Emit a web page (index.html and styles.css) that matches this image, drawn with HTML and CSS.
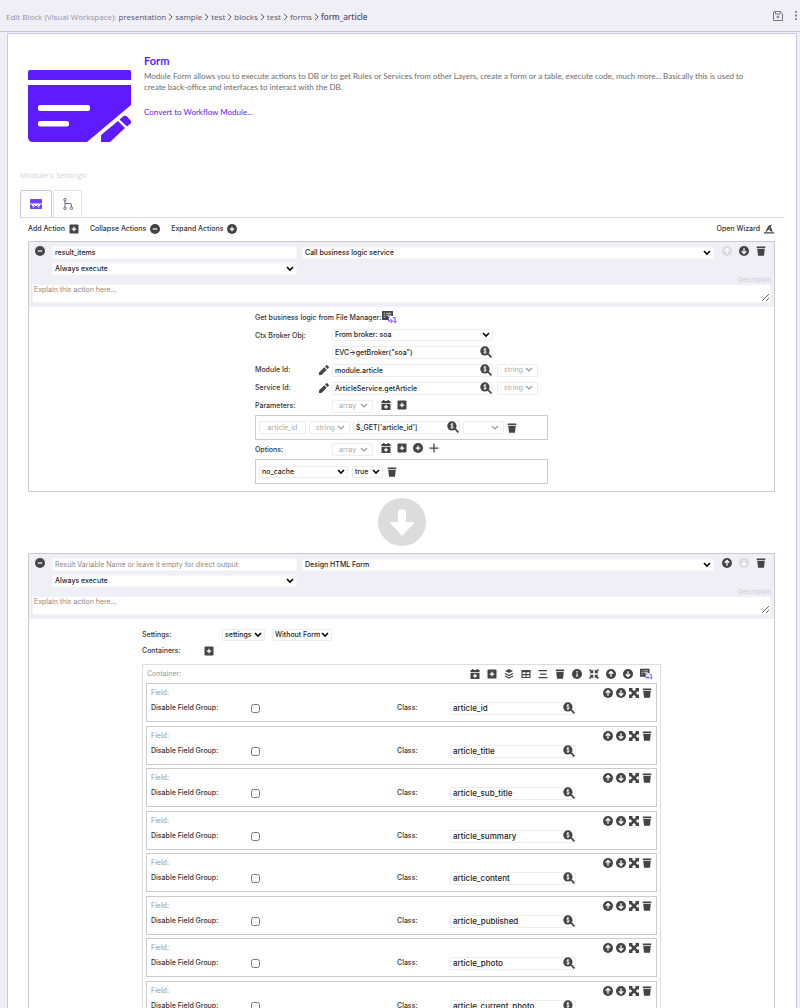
FILE: index.html
```
<!DOCTYPE html>
<html lang="en">
<head>
<meta charset="utf-8">
<title>Edit Block (Visual Workspace)</title>
<link rel="stylesheet" href="styles.css">
</head>
<body>
<svg class="sprite" aria-hidden="true">
  <symbol id="i-minus" viewBox="0 0 20 20"><circle cx="10" cy="10" r="10"/><path d="M5.5 10h9" class="cut"/></symbol>
  <symbol id="i-plus-c" viewBox="0 0 20 20"><circle cx="10" cy="10" r="10"/><path d="M5.5 10h9M10 5.500v9" class="cut"/></symbol>
  <symbol id="i-plus-s" viewBox="0 0 20 20"><rect x="1" y="1" width="18" height="18" rx="2"/><path d="M5.500 10h9M10 5.500v9" class="cut"/></symbol>
  <symbol id="i-plus" viewBox="0 0 20 20"><path d="M1 10h18M10 1v18" class="line"/></symbol>
  <symbol id="i-up" viewBox="0 0 20 20"><circle cx="10" cy="10" r="10"/><path d="M10 15.500V5.500M5.500 9.500 10 5l4.500 4.500" class="cut"/></symbol>
  <symbol id="i-down" viewBox="0 0 20 20"><circle cx="10" cy="10" r="10"/><path d="M10 4.500v10M5.500 10.500 10 15l4.500-4.500" class="cut"/></symbol>
  <symbol id="i-trash" viewBox="0 0 20 20"><path d="M1.500 1H18.500V4.500H1.500zM2.500 6h15L16 19.500H4z"/></symbol>
  <symbol id="i-info" viewBox="0 0 20 20"><circle cx="10" cy="10" r="10"/><path d="M10 9v7M10 4v3" class="cut"/></symbol>
  <symbol id="i-search" viewBox="0 0 22 22"><circle cx="9" cy="9" r="8.500"/><path d="m14 15.500 2-2 6 6-2.500 2.500z"/><path d="M11.500 6.200C10.500 5 7 5 7 7s4.500 1.800 4.500 4-3.800 2.300-5 .8M9 3.500v11" class="cut thin"/></symbol>
  <symbol id="i-pencil" viewBox="0 0 20 20"><path d="M0 20v-5L10.500 4.500l5 5L5 20zM12 3l2.500-2.500q1-1 2 0l3 3q1 1 0 2L17 8z"/></symbol>
  <symbol id="i-cal" viewBox="0 0 20 20"><path d="M1 2h3V0h3v2h6V0h3v2h3v4H1zM1 7.500h18V20H1z"/><path d="M6 13.500h8M10 9.500v8" class="cut"/></symbol>
  <symbol id="i-layers" viewBox="0 0 20 20"><path d="m10 0 8 4-8 4-8-4z"/><path d="m2 9 8 4 8-4M2 14l8 4 8-4" class="line"/></symbol>
  <symbol id="i-table" viewBox="0 0 22 20"><path d="M1 1h20v18H1zM3.500 6v4H10V6zM12 6v4h6.500V6zM3.500 12.500v4H10v-4zM12 12.500v4h6.500v-4z" fill-rule="evenodd"/></symbol>
  <symbol id="i-list" viewBox="0 0 20 20"><path d="M1 3h17M4 10h13M1 17h18" class="line"/></symbol>
  <symbol id="i-expand" viewBox="0 0 20 20"><path d="M0 0h8L5.800 2.200 10 6.500l4.200-4.300L12 0h8v8l-2.200-2.200L13.500 10l4.300 4.200L20 12v8h-8l2.200-2.200L10 13.500l-4.200 4.300L8 20H0v-8l2.200 2.200L6.500 10 2.200 5.800 0 8z"/></symbol>
  <symbol id="i-collapse" viewBox="0 0 20 20"><path d="M8.500 8.500H1l2.500-2.500L0 2.500 2.500 0 6 3.500 8.500 1zM11.500 8.500V1L14 3.500 17.500 0 20 2.500 16.500 6 19 8.500zM8.500 11.500V19L6 16.500 2.500 20 0 17.500 3.500 14 1 11.500zM11.500 11.500H19L16.500 14l3.500 3.500-2.500 2.500-3.500-3.500-2.500 2.500z"/></symbol>
  <symbol id="i-board" viewBox="0 0 30 26"><path d="M1 0h20q1 0 1 1v9H12v8H1q-1 0-1-1V1q0-1 1-1z"/><path d="M3.500 4.500h3M8.500 4.500h10M3.500 8.500h3M8.500 8.500h10M3.500 12.500h3" class="cut thin"/><path d="M16 12h-3v8h7m-3-4 4 4-4 4M22 13h4v10m-3-3 3 3 3-3" class="accent-line"/></symbol>
  <symbol id="i-wizard" viewBox="0 0 22 20"><path d="M0 17h22v3H0zM3 15.500 10 3l7-3-2 5 4 10.500h-5l-1-4H8.500l-1.500 4zM10 9h2.500V6z" fill-rule="evenodd"/></symbol>
  <symbol id="i-next" viewBox="0 0 12 20"><path d="m2 2 8 8-8 8" class="line"/></symbol>
</svg>

<header class="topbar">
  <nav class="crumbs" aria-label="Breadcrumb">
    <span class="crumbs-title">Edit Block (Visual Workspace):</span>
    <a href="#">presentation</a><svg class="sep"><use href="#i-next"/></svg>
    <a href="#">sample</a><svg class="sep"><use href="#i-next"/></svg>
    <a href="#">test</a><svg class="sep"><use href="#i-next"/></svg>
    <a href="#">blocks</a><svg class="sep"><use href="#i-next"/></svg>
    <a href="#">test</a><svg class="sep"><use href="#i-next"/></svg>
    <a href="#">forms</a><svg class="sep"><use href="#i-next"/></svg>
    <a href="#" class="current">form_article</a>
  </nav>
  <button class="icon-btn" aria-label="Save"><svg class="save" viewBox="0 0 20 20"><path d="M2 1h12l5 4v14H1V2zM5 1v5h9V1"/><circle cx="10" cy="12" r="2"/></svg></button>
  <button class="icon-btn" aria-label="More"><svg class="dots" viewBox="0 0 4 20"><path d="M0 0h4v4H0zM0 8h4v4H0zM0 16h4v4H0z"/></svg></button>
</header>

<main class="page">
  <section class="hero">
    <svg class="hero-logo" viewBox="0 0 103 72">
      <path d="M2 0h99q2 0 2 2v8H0V2q0-2 2-2zM0 15h103v20L59 72H5q-5 0-5-5zM12 35a2 2 0 0 0-2 2v2a2 2 0 0 0 2 2H60a2 2 0 0 0 2-2v-2a2 2 0 0 0-2-2zM12 51a2 2 0 0 0-2 2v1.500a2 2 0 0 0 2 2H39a2 2 0 0 0 2-2V53a2 2 0 0 0-2-2z"/>
      <path d="M73 72v-7l17-14 7 7-15 14zM91.500 49.500l3.500-3q2-1.500 4 0l3.500 4q1.500 2 0 3l-3.500 3z"/>
    </svg>
    <div class="hero-text">
      <h1>Form</h1>
      <p>Module Form allows you to execute actions to DB or to get Rules or Services from other Layers, create a form or a table, execute code, much more... Basically this is used to create back-office and interfaces to interact with the DB.</p>
      <a href="#">Convert to Workflow Module...</a>
    </div>
  </section>

  <h2 class="settings-title">Module's Settings:</h2>
  <div class="tabs">
    <button class="tab active" aria-label="Actions"><svg viewBox="0 0 24 20"><rect width="24" height="9" rx="2"/><path d="M0 11h4v3h4v-2h8v2h4v-3h4v7q0 2-2 2H2q-2 0-2-2z"/><path d="M5 16h3l2-3h4l2 3h3" class="cut thin"/></svg></button>
    <button class="tab" aria-label="Workflow"><svg viewBox="0 0 20 24" class="outline"><circle cx="4" cy="3.500" r="2.500"/><circle cx="4" cy="20.500" r="2.500"/><circle cx="17" cy="20.500" r="2.500"/><path d="M4 6v12M4 11h10q3 0 3 3v4"/></svg></button>
  </div>

  <div class="toolbar">
    <button class="text-btn">Add Action <svg class="ico"><use href="#i-plus-s"/></svg></button>
    <button class="text-btn">Collapse Actions <svg class="ico"><use href="#i-minus"/></svg></button>
    <button class="text-btn">Expand Actions <svg class="ico"><use href="#i-plus-c"/></svg></button>
    <button class="text-btn push">Open Wizard <svg class="ico"><use href="#i-wizard"/></svg></button>
  </div>

  <article class="action">
    <header class="action-head">
      <div class="head-row">
        <button class="icon-btn fold" aria-label="Collapse"><svg class="ico"><use href="#i-minus"/></svg></button>
        <div class="head-name">
          <input class="field plain" aria-label="Result variable name" value="result_items">
          <select class="field plain" aria-label="Condition"><option>Always execute</option></select>
        </div>
        <select class="field plain head-type" aria-label="Action type"><option>Call business logic service</option></select>
        <div class="head-icons">
          <button class="icon-btn" disabled aria-label="Move up"><svg class="ico"><use href="#i-up"/></svg></button>
          <button class="icon-btn" aria-label="Move down"><svg class="ico"><use href="#i-down"/></svg></button>
          <button class="icon-btn" aria-label="Remove"><svg class="ico"><use href="#i-trash"/></svg></button>
        </div>
      </div>
      <label class="desc-label" for="d1">Description</label>
      <textarea id="d1" class="desc" placeholder="Explain this action here..."></textarea>
    </header>

    <div class="logic">
      <div class="intro">Get business logic from File Manager: <button class="icon-btn" aria-label="Browse"><svg class="ico-board"><use href="#i-board"/></svg></button></div>
      <div class="form-row broker">
        <label for="broker">Ctx Broker Obj:</label>
        <div class="stack">
          <select id="broker" class="field"><option>From broker: soa</option></select>
          <span class="lookup"><input class="field" aria-label="Broker expression" value="EVC-&gt;getBroker(&quot;soa&quot;)"><button class="icon-btn" aria-label="Pick variable"><svg class="ico-search"><use href="#i-search"/></svg></button></span>
        </div>
      </div>
      <div class="form-row">
        <label for="mod">Module Id:</label>
        <button class="icon-btn pen" aria-label="Edit"><svg class="ico"><use href="#i-pencil"/></svg></button>
        <span class="lookup"><input id="mod" class="field" value="module.article"><button class="icon-btn" aria-label="Pick variable"><svg class="ico-search"><use href="#i-search"/></svg></button></span>
        <select class="field muted type" aria-label="Module type"><option>string</option></select>
      </div>
      <div class="form-row">
        <label for="srv">Service Id:</label>
        <button class="icon-btn pen" aria-label="Edit"><svg class="ico"><use href="#i-pencil"/></svg></button>
        <span class="lookup"><input id="srv" class="field" value="ArticleService.getArticle"><button class="icon-btn" aria-label="Pick variable"><svg class="ico-search"><use href="#i-search"/></svg></button></span>
        <select class="field muted type" aria-label="Service type"><option>string</option></select>
      </div>
      <div class="form-row">
        <label for="par">Parameters:</label>
        <select id="par" class="field muted type"><option>array</option></select>
        <div class="row-icons">
          <button class="icon-btn" aria-label="Add variable"><svg class="ico"><use href="#i-cal"/></svg></button>
          <button class="icon-btn" aria-label="Add parameter"><svg class="ico"><use href="#i-plus-s"/></svg></button>
        </div>
      </div>
      <div class="box params">
        <input class="field muted key" aria-label="Parameter name" value="article_id">
        <select class="field muted type" aria-label="Parameter name type"><option>string</option></select>
        <span class="lookup"><input class="field" aria-label="Parameter value" value="$_GET['article_id']"><button class="icon-btn" aria-label="Pick variable"><svg class="ico-search"><use href="#i-search"/></svg></button></span>
        <select class="field muted type" aria-label="Parameter value type"><option></option></select>
        <button class="icon-btn" aria-label="Remove"><svg class="ico"><use href="#i-trash"/></svg></button>
      </div>
      <div class="form-row">
        <label for="opt">Options:</label>
        <select id="opt" class="field muted type"><option>array</option></select>
        <div class="row-icons">
          <button class="icon-btn" aria-label="Add variable"><svg class="ico"><use href="#i-cal"/></svg></button>
          <button class="icon-btn" aria-label="Add option"><svg class="ico"><use href="#i-plus-s"/></svg></button>
          <button class="icon-btn" aria-label="Add group"><svg class="ico"><use href="#i-plus-c"/></svg></button>
          <button class="icon-btn" aria-label="Add"><svg class="ico"><use href="#i-plus"/></svg></button>
        </div>
      </div>
      <div class="box">
        <select class="field opt-name" aria-label="Option"><option>no_cache</option></select>
        <select class="field opt-value" aria-label="Option value"><option>true</option></select>
        <button class="icon-btn" aria-label="Remove"><svg class="ico"><use href="#i-trash"/></svg></button>
      </div>
    </div>
  </article>

  <svg class="flow-arrow" viewBox="0 0 48 48"><circle cx="24" cy="24" r="24"/><path d="M20 13.500q0-2 2-2h4q2 0 2 2V24h7q2 0 .5 1.500L24 38 12.500 25.500Q11 24 13 24h7z"/></svg>

  <article class="action">
    <header class="action-head">
      <div class="head-row">
        <button class="icon-btn fold" aria-label="Collapse"><svg class="ico"><use href="#i-minus"/></svg></button>
        <div class="head-name">
          <input class="field plain" aria-label="Result variable name" placeholder="Result Variable Name or leave it empty for direct output">
          <select class="field plain" aria-label="Condition"><option>Always execute</option></select>
        </div>
        <select class="field plain head-type" aria-label="Action type"><option>Design HTML Form</option></select>
        <div class="head-icons">
          <button class="icon-btn" aria-label="Move up"><svg class="ico"><use href="#i-up"/></svg></button>
          <button class="icon-btn" disabled aria-label="Move down"><svg class="ico"><use href="#i-down"/></svg></button>
          <button class="icon-btn" aria-label="Remove"><svg class="ico"><use href="#i-trash"/></svg></button>
        </div>
      </div>
      <label class="desc-label" for="d2">Description</label>
      <textarea id="d2" class="desc" placeholder="Explain this action here..."></textarea>
    </header>

    <div class="designer">
      <div class="set-row">
        <label for="set">Settings:</label>
        <select id="set" class="field set-main"><option>settings</option></select>
        <select class="field set-form" aria-label="Form mode"><option>Without Form</option></select>
      </div>
      <div class="set-row containers"><span>Containers:</span><button class="icon-btn" aria-label="Add container"><svg class="ico"><use href="#i-plus-s"/></svg></button></div>

      <section class="container">
        <div class="container-head">
          <span>Container:</span>
          <div class="container-icons">
            <button class="icon-btn" aria-label="Add variable"><svg class="ico"><use href="#i-cal"/></svg></button>
            <button class="icon-btn" aria-label="Add field"><svg class="ico"><use href="#i-plus-s"/></svg></button>
            <button class="icon-btn" aria-label="Add container"><svg class="ico"><use href="#i-layers"/></svg></button>
            <button class="icon-btn" aria-label="Add table"><svg class="ico"><use href="#i-table"/></svg></button>
            <button class="icon-btn" aria-label="Add tree"><svg class="ico"><use href="#i-list"/></svg></button>
            <button class="icon-btn" aria-label="Remove"><svg class="ico"><use href="#i-trash"/></svg></button>
            <button class="icon-btn" aria-label="Info"><svg class="ico"><use href="#i-info"/></svg></button>
            <button class="icon-btn" aria-label="Minimize"><svg class="ico"><use href="#i-collapse"/></svg></button>
            <button class="icon-btn" aria-label="Move up"><svg class="ico"><use href="#i-up"/></svg></button>
            <button class="icon-btn" aria-label="Move down"><svg class="ico"><use href="#i-down"/></svg></button>
            <button class="icon-btn" aria-label="Browse"><svg class="ico-board"><use href="#i-board"/></svg></button>
          </div>
        </div>
        <div class="fields" id="fields"></div>
      </section>
    </div>
  </article>
</main>
<script src="fields.js"></script>
</body>
</html>
```
FILE: fields.js
```
const names = ["article_id", "article_title", "article_sub_title", "article_summary",
  "article_content", "article_published", "article_photo", "article_current_photo"];

const button = (label, icon) =>
  `<button class="icon-btn" aria-label="${label}"><svg class="ico"><use href="#${icon}"/></svg></button>`;

document.getElementById("fields").innerHTML = names.map((name, i) => `
  <div class="field-card">
    <div class="field-head"><span>Field:</span>
      <div class="field-icons">${button("Move up", "i-up")}${button("Move down", "i-down")}${button("Maximize", "i-expand")}${button("Remove", "i-trash")}</div>
    </div>
    <div class="field-body">
      <label for="off${i}">Disable Field Group:</label>
      <input type="checkbox" class="check" id="off${i}">
      <label for="cls${i}">Class:</label>
      <span class="lookup"><input class="field" id="cls${i}" value="${name}"><button class="icon-btn" aria-label="Pick variable"><svg class="ico-search"><use href="#i-search"/></svg></button></span>
    </div>
  </div>`).join("");
```
FILE: styles.css
```
* { box-sizing: border-box; }
body {
  margin: 0; height: 100vh; display: flex; flex-direction: column; overflow: hidden;
  background: #f0eff5; color: #333; font: 500 7px/10px Inter, "Open Sans", sans-serif;
}
button, input, select, textarea { font: inherit; color: inherit; margin: 0; }
a { text-decoration: none; color: inherit; }
.sprite { position: absolute; width: 0; height: 0; }
svg { display: block; fill: currentColor; }
.cut { fill: none; stroke: #fff; stroke-width: 2.5; }
.thin { stroke-width: 1.5; }
.line { fill: none; stroke: currentColor; stroke-width: 2.5; }
.accent-line { fill: none; stroke: #7440ff; stroke-width: 2; }
.icon-btn { padding: 0; border: 0; background: none; color: #444; display: block; flex: none; }
.icon-btn:disabled { color: #dadadf; }
.ico { width: 10px; height: 10px; }
.ico-search { width: 12px; height: 12px; }
.ico-board { width: 15px; height: 13px; }

.topbar { display: flex; align-items: center; flex: none; height: 32px; padding: 0 3px 0 6px; border-bottom: 1px solid #c4c4e0; font-family: "Open Sans", sans-serif; font-size: 8px; }
.crumbs { display: flex; align-items: center; gap: 2px; margin-right: auto; padding-top: 3px; color: #55526b; }
.crumbs-title { color: #9492ab; font-weight: 400; }
.crumbs .current { font-weight: 600; }
.sep { width: 5px; height: 8px; }
.topbar .icon-btn { color: #77758a; margin-left: 12px; }
.save { width: 10px; height: 10px; fill: none; stroke: currentColor; stroke-width: 2; }
.dots { width: 2px; height: 9px; }

.page {
  flex: 1; min-height: 0; overflow: auto; scrollbar-width: none;
  margin: 1px 3px 0 7px; padding: 20px 12px 0; background: #fff;
  border: 1px solid #c9c9e2; border-bottom: 0;
}
.hero { display: flex; gap: 13px; padding: 0 24px 0 8px; min-height: 116px; }
.hero-logo { flex: none; width: 103px; height: 72px; margin-top: 16px; fill: #5f1bff; }
.hero-text { color: #6c6c6c; font: 400 8px/11px Lato, sans-serif; }
.hero h1 { margin: 0 0 3px; color: #5f1bff; font-size: 11px; line-height: 14px; font-weight: 700; }
.hero p { margin: 0 0 14px; }
.hero a { color: #5f1bff; }
.settings-title { margin: 0 0 10px; color: #d4d4d4; font: 400 8px/10px "Open Sans", sans-serif; }
.tabs { display: flex; gap: 1px; border-bottom: 1px solid #dcdbec; }
.tab { display: flex; align-items: center; justify-content: center; width: 29px; height: 27px; padding: 0; border: 1px solid #e2e1f2; border-bottom: 0; border-radius: 3px 3px 0 0; background: #fff; color: #6c6a7e; }
.tab.active { width: 32px; border-color: #c9c8e4; color: #7440ff; }
.tab svg { width: 12px; height: 10px; }
.tab .outline { height: 12px; width: 10px; fill: none; stroke: currentColor; stroke-width: 2; }
.toolbar { display: flex; gap: 11px; padding: 6px 10px 7px 8px; }
.text-btn { display: flex; align-items: center; gap: 4px; padding: 0; border: 0; background: none; }
.text-btn .ico { color: #444; }
.push { margin-left: auto; }

.action { margin: 0 9px 0 8px; border: 1px solid #cbcbcf; }
.action-head { padding: 4px 3px; background: #f0eff5; }
.head-row { display: grid; grid-template-columns: 15px minmax(0, 245fr) minmax(0, 412fr) 52px; column-gap: 5px; align-items: start; }
.fold { margin: 0 0 0 3px; }
.head-name { display: grid; gap: 4px; }
.head-type { margin-top: 1px; }
.head-icons { display: flex; gap: 7px; padding-left: 3px; }
.field {
  display: block; width: 100%; min-width: 0; height: 13px; padding: 0 2px; line-height: 11px;
  border: 1px solid #eee; border-radius: 1px; background: #fff; color: #222;
}
.plain { border-color: #f7f7fa; }
.field::placeholder, .desc::placeholder { color: #888; opacity: 1; font-weight: 400; }
select.field {
  appearance: none; height: 12px; line-height: 10px; padding: 0 10px 0 2px; background: #fff no-repeat right 2px center / 8px 6px;
  background-image: url("data:image/svg+xml,%3Csvg xmlns='http://www.w3.org/2000/svg' viewBox='0 0 8 6'%3E%3Cpath d='M1 1l3 3 3-3' fill='none' stroke='%23000' stroke-width='1.6'/%3E%3C/svg%3E");
}
.field.muted { color: #aaa; font-weight: 400; }
select.muted { background-image: url("data:image/svg+xml,%3Csvg xmlns='http://www.w3.org/2000/svg' viewBox='0 0 8 6'%3E%3Cpath d='M1 1l3 3 3-3' fill='none' stroke='%23999' stroke-width='1.2'/%3E%3C/svg%3E"); }
.desc-label { display: block; height: 9px; color: #ccc; font-size: 6px; line-height: 9px; font-weight: 400; text-align: right; }
.desc { display: block; width: 100%; height: 19px; padding: 0 1px; border: 1px solid #f4f4f8; background: #fff; }

.logic { width: 293px; margin: 0 auto; padding: 3px 0 7px; color: #333; }
.intro { display: flex; align-items: center; gap: 1px; height: 15px; margin-bottom: 4px; }
.form-row { display: grid; grid-template-columns: 60px 9px 161px 41px; column-gap: 4px; align-items: center; min-height: 18px; }
.form-row > label { grid-column: 1; }
.broker { align-items: start; margin-bottom: 2px; }
.broker > label { padding-top: 2px; }
.form-row > .stack, .form-row > .lookup { grid-column: 3; }
.stack { display: grid; gap: 5px; }
.lookup { display: block; position: relative; }
.lookup .icon-btn { position: absolute; right: 1px; top: 0; }
.type { width: 41px; }
select.field.type { height: 13px; padding-left: 6px; background-position: right 4px center; }
.form-row > select[id] { grid-column: 3; grid-row: 1; }
.row-icons { grid-column: 3; grid-row: 1; display: flex; gap: 6px; margin-left: 49px; padding-bottom: 3px; }
.box { display: flex; align-items: center; gap: 4px; min-height: 25px; padding: 0 3px; border: 1px solid #ccc; }
.params { gap: 3px; }
.box + .form-row { min-height: 19px; }
.key { width: 47px; text-align: center; }
.params .lookup { width: 107px; }
.opt-name { width: 89px; }
.opt-value { width: 31px; }

.flow-arrow { width: 48px; height: 48px; margin: 6px auto 7px; fill: #dcdcdc; }
.flow-arrow path { fill: #fff; }

.designer { width: 519px; margin: 0 auto; padding-top: 8px; }
.set-row { display: flex; align-items: center; height: 16px; }
.set-row > :first-child { width: 80px; }
.set-main { width: 43px; margin-right: 7px; }
.set-form { width: 60px; }
.set-row.containers > :first-child { width: 62px; }
.container { margin-top: 5px; padding: 0 3px; border: 1px solid #ddd; color: #999; }
.container-head, .field-head { display: flex; justify-content: space-between; align-items: center; }
.container-head { height: 18px; padding: 0 4px 0 1px; font-weight: 400; }
.container-icons { display: flex; align-items: center; gap: 7px; }
.container-icons .ico-board { width: 13px; }
.field-card { height: 39px; padding: 3px 4px; border: 1px solid #ccc; }
.field-card + .field-card { margin-top: 3px; }
.field-card:nth-child(even) { margin-top: 4px; }
.field-head { height: 11px; font-weight: 400; }
.field-icons { display: flex; gap: 3px; }
.field-body { display: grid; grid-template-columns: 100px 146px 53px 126px; align-items: center; height: 20px; color: #333; }
.field-body .field { font-size: 8px; }
.check { width: 9px; height: 9px; }
```
